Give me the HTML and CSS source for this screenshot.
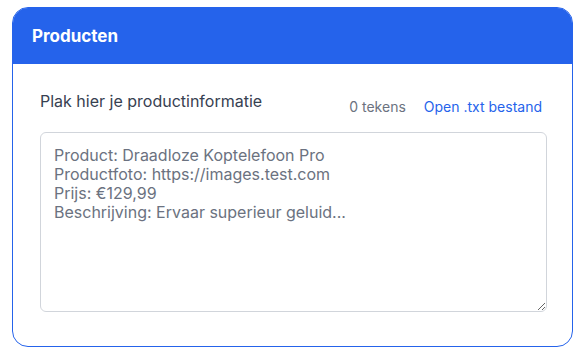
FILE: index.html
```html
<!DOCTYPE html>
<html>
<head>
    <meta charset="UTF-8">
    <meta name="viewport" content="width=device-width, initial-scale=1.0">
    <title>Producten</title>
    <link rel="stylesheet" href="styles.css">
</head>
<body>
    <div class="card">
        <div class="card-header">Producten</div>
        <div class="card-body">
            <div class="input-row">
                <label class="input-label" for="product-input">Plak hier je productinformatie</label>
                <div class="input-meta">
                    <span class="char-count">0 tekens</span>
                    <a class="open-file" href="#">Open .txt bestand</a>
                </div>
            </div>
            <textarea id="product-input" class="product-input" placeholder="Product: Draadloze Koptelefoon Pro
Productfoto: https://images.test.com
Prijs: €129,99
Beschrijving: Ervaar superieur geluid..."></textarea>
        </div>
    </div>
</body>
</html>
```

FILE: styles.css
```css
/* Page */
body {
    font-family: Inter, "Noto Sans", sans-serif;
    background-color: #ffffff;
    margin: 0;
    padding: 7px 11px 0 12px;
}

/* Card */
.card {
    border: 1px solid #2563eb;
    border-radius: 16px;
    overflow: hidden;
    background-color: #ffffff;
}

.card-header {
    background-color: #2563eb;
    color: #ffffff;
    font-size: 17px;
    font-weight: 700;
    height: 56px;
    display: flex;
    align-items: center;
    padding: 0 19px;
}

.card-body {
    padding: 27px 25px 34px 27px;
}

/* Label row */
.input-row {
    display: flex;
    justify-content: space-between;
    align-items: flex-end;
    margin-bottom: 17px;
}

.input-label {
    font-size: 16px;
    color: #374151;
    padding-bottom: 4px;
}

.input-meta {
    display: flex;
    gap: 18px;
    font-size: 14px;
    padding-right: 5px;
}

.char-count {
    color: #6b7280;
}

.open-file {
    color: #2563eb;
    text-decoration: none;
}

/* Textarea */
.product-input {
    display: block;
    width: 100%;
    height: 180px;
    box-sizing: border-box;
    border: 1px solid #d1d5db;
    border-radius: 6px;
    padding: 13px;
    font-family: Inter, "Noto Sans", sans-serif;
    font-size: 16px;
    line-height: 19px;
    color: #1f2937;
    outline: none;
}

.product-input::placeholder {
    color: #6b7280;
}
```
